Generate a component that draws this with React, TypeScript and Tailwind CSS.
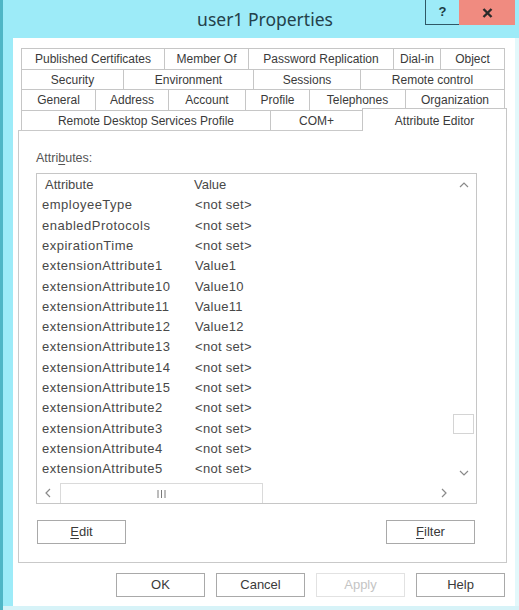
const tabRows: [string, number][][] = [
  [["Published Certificates", 143], ["Member Of", 84], ["Password Replication", 145], ["Dial-in", 47], ["Object", 65]],
  [["Security", 102], ["Environment", 130], ["Sessions", 107], ["Remote control", 145]],
  [["General", 74], ["Address", 73], ["Account", 77], ["Profile", 64], ["Telephones", 96], ["Organization", 100]],
];

const rowHeights = ["h-[21px]", "h-[20px]", "h-[21px]"];

const attributes: [string, string][] = [
  ["employeeType", "<not set>"],
  ["enabledProtocols", "<not set>"],
  ["expirationTime", "<not set>"],
  ["extensionAttribute1", "Value1"],
  ["extensionAttribute10", "Value10"],
  ["extensionAttribute11", "Value11"],
  ["extensionAttribute12", "Value12"],
  ["extensionAttribute13", "<not set>"],
  ["extensionAttribute14", "<not set>"],
  ["extensionAttribute15", "<not set>"],
  ["extensionAttribute2", "<not set>"],
  ["extensionAttribute3", "<not set>"],
  ["extensionAttribute4", "<not set>"],
  ["extensionAttribute5", "<not set>"],
];

function Chevron({ dir }: { dir: "up" | "down" | "left" | "right" }) {
  const d = {
    up: "M1 5 L5 1 L9 5",
    down: "M1 1 L5 5 L9 1",
    left: "M5 1 L1 5 L5 9",
    right: "M1 1 L5 5 L1 9",
  }[dir];
  const horiz = dir === "up" || dir === "down";
  return (
    <svg width={horiz ? 10 : 6} height={horiz ? 6 : 10} viewBox={horiz ? "0 0 10 6" : "0 0 6 10"} fill="none">
      <path d={d} stroke="#8a8a8a" strokeWidth="1.2" />
    </svg>
  );
}

function DialogButton({ children, disabled }: { children: React.ReactNode; disabled?: boolean }) {
  return (
    <div
      className={
        disabled
          ? "w-[89px] h-[24px] flex items-center justify-center border border-[#e2e2e2] bg-white text-[13px] text-[#c4c4c4]"
          : "w-[89px] h-[24px] flex items-center justify-center border border-[#a9a9a9] bg-white text-[13px] text-[#3a3a3a]"
      }
    >
      {children}
    </div>
  );
}

export default function App() {
  return (
    <div className="w-[519px] h-[610px] flex flex-col bg-[#9debf8] font-['Liberation_Sans',Arial,sans-serif] text-[#333] overflow-hidden">
      {/* title bar */}
      <div className="h-[38px] shrink-0 grid grid-cols-[94px_1fr_94px] border-l-[3px] border-[#4fb6c6]">
        <div />
        <div className="flex items-center justify-center pl-[8px] font-['Noto_Sans',sans-serif] text-[17.5px] text-[#24414b]">
          user1 Properties
        </div>
        <div className="flex items-start">
          <div className="w-[34px] h-[25px] flex items-center justify-center border-l border-b border-[#2f5866] text-[13px] font-bold text-[#1c3a44]">
            ?
          </div>
          <div className="w-[56px] h-[25px] flex items-center justify-center bg-[#f08b80]">
            <svg width="11" height="10" viewBox="0 0 11 10">
              <path d="M1.5 1 L9.5 9 M9.5 1 L1.5 9" stroke="#2a2a2a" strokeWidth="2.4" />
            </svg>
          </div>
        </div>
      </div>

      <div className="flex flex-1 min-h-0">
        <div className="w-[13px] shrink-0 border-l-[3px] border-[#4fb6c6]" />

        <div className="w-[502px] shrink-0 bg-white flex flex-col pl-[5px] pt-[10px]">
          {/* tab strip */}
          <div className="w-[489px] pl-[3px] text-[12px] text-[#3a3a3a]">
            {tabRows.map((row, i) => (
              <div key={i} className={"flex " + rowHeights[i]}>
                {row.map(([label, w], j) => (
                  <div
                    key={label}
                    style={{ width: w }}
                    className={
                      j === row.length - 1
                        ? "flex items-center justify-center border-t border-l border-r border-[#c6c6c6] bg-white"
                        : "flex items-center justify-center border-t border-l border-[#c6c6c6] bg-white"
                    }
                  >
                    {label}
                  </div>
                ))}
              </div>
            ))}
            <div className="flex h-[20px] items-end">
              <div className="w-[249px] h-[20px] flex items-center justify-center border-t border-l border-[#c6c6c6]">
                Remote Desktop Services Profile
              </div>
              <div className="w-[92px] h-[20px] flex items-center justify-center border-t border-l border-[#c6c6c6]">
                COM+
              </div>
              <div className="relative z-10 w-[145px] h-[23px] -mb-px flex items-start justify-center pt-[3px] border-t border-l border-r border-[#c6c6c6] bg-white">
                Attribute Editor
              </div>
            </div>
          </div>

          {/* tab page */}
          <div className="w-[489px] h-[433px] border border-[#c9c9c9] flex flex-col pl-[17px] pt-[19px]">
            <div className="h-[16px] flex items-center text-[12.5px] text-[#555]">
              Attri<span className="underline underline-offset-2">b</span>utes:
            </div>

            <div className="mt-[7px] w-[441px] h-[331px] border border-[#c6c6c6] flex flex-col">
              <div className="flex flex-1 min-h-0">
                <div className="flex-1 flex flex-col text-[13px] text-[#484848]">
                  <div className="h-[21px] flex items-center">
                    <span className="w-[157px] pl-[8px]">Attribute</span>
                    <span>Value</span>
                  </div>
                  {attributes.map(([name, value]) => (
                    <div key={name} className="h-[20.3px] flex items-center">
                      <span className="w-[158px] pl-[5px] tracking-[0.5px]">{name}</span>
                      <span className="tracking-[0.3px]">{value}</span>
                    </div>
                  ))}
                </div>
                {/* vertical scrollbar */}
                <div className="w-[22px] flex flex-col">
                  <div className="h-[21px] flex items-center justify-center pr-[2px]">
                    <Chevron dir="up" />
                  </div>
                  <div className="flex-1">
                    <div className="mt-[219px] -ml-[1px] w-[21px] h-[20px] border border-[#d4d4d4]" />
                  </div>
                  <div className="h-[21px] flex items-center justify-center pr-[2px]">
                    <Chevron dir="down" />
                  </div>
                </div>
              </div>
              {/* horizontal scrollbar */}
              <div className="h-[20px] flex">
                <div className="w-[22px] flex items-center justify-center">
                  <Chevron dir="left" />
                </div>
                <div className="ml-[1px] w-[203px] border-l border-r border-t border-[#dadada] flex items-center justify-center">
                  <svg width="9" height="8" viewBox="0 0 9 8">
                    <path d="M1 0 V8 M4.5 0 V8 M8 0 V8" stroke="#7a7a7a" strokeWidth="1" />
                  </svg>
                </div>
                <div className="flex-1" />
                <div className="w-[21px] flex items-center justify-center">
                  <Chevron dir="right" />
                </div>
                <div className="w-[22px]" />
              </div>
            </div>

            <div className="mt-[16px] w-[441px] flex justify-between pl-[1px] pr-[2px]">
              <DialogButton>
                <span className="underline underline-offset-2">E</span>dit
              </DialogButton>
              <DialogButton>
                <span className="underline underline-offset-2">F</span>ilter
              </DialogButton>
            </div>
          </div>

          {/* dialog buttons */}
          <div className="mt-[10px] flex justify-end gap-[11px] pr-[10px]">
            <DialogButton>OK</DialogButton>
            <DialogButton>Cancel</DialogButton>
            <DialogButton disabled>Apply</DialogButton>
            <DialogButton>Help</DialogButton>
          </div>
        </div>

        <div className="flex-1 bg-[#e3f8fb]" />
      </div>
      <div className="h-[4px] shrink-0 bg-[#d7f3f8] border-l-[3px] border-[#4fb6c6]" />
    </div>
  );
}
